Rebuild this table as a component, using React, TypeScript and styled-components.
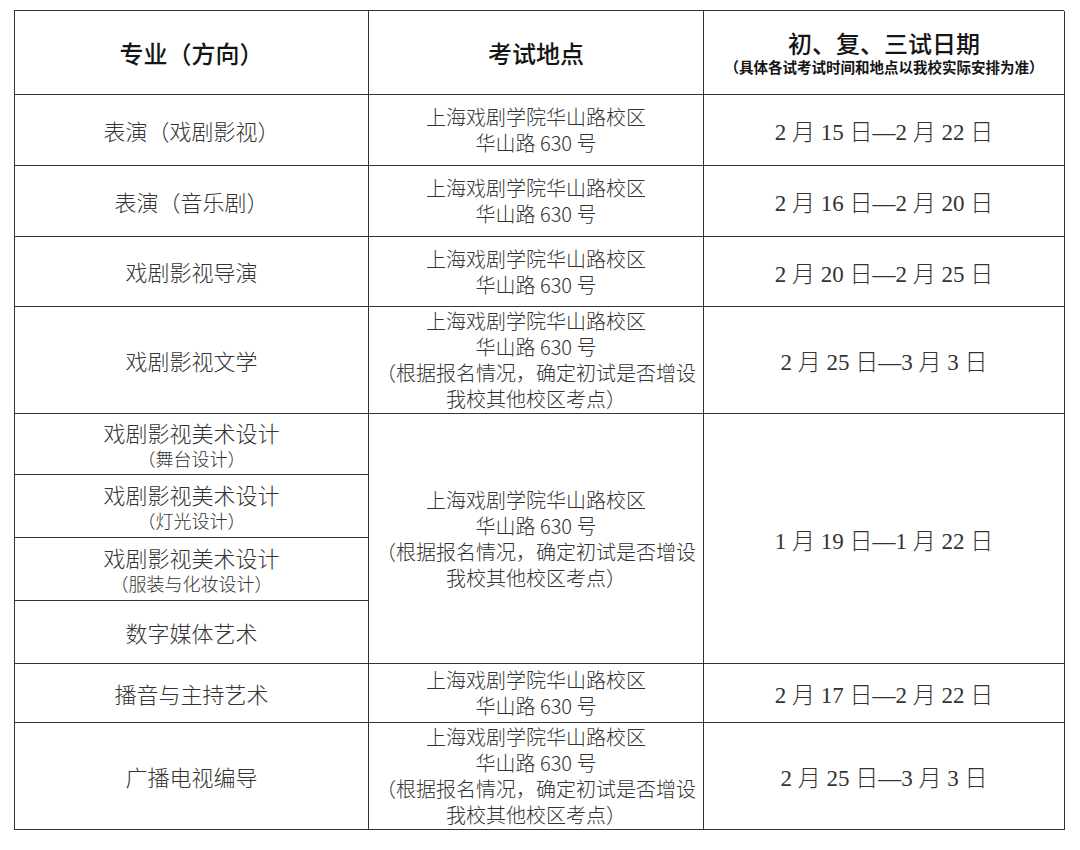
import styled, { createGlobalStyle } from 'styled-components'

const GlobalStyle = createGlobalStyle`
  html, body {
    margin: 0;
    background: #fff;
  }
  body {
    padding: 10px 0 0 14px;
    font-family: 'Noto Sans CJK SC', sans-serif;
  }
`

interface Major {
  name: string
  note?: string
  height: number
}

interface Group {
  majors: Major[]
  place: string[]
  date: string
}

const ADDR = ['上海戏剧学院华山路校区', '华山路 630 号']
const ADDR_MORE = [...ADDR, '（根据报名情况，确定初试是否增设', '我校其他校区考点）']

const groups: Group[] = [
  { majors: [{ name: '表演（戏剧影视）', height: 71 }], place: ADDR, date: '2 月 15 日—2 月 22 日' },
  { majors: [{ name: '表演（音乐剧）', height: 71 }], place: ADDR, date: '2 月 16 日—2 月 20 日' },
  { majors: [{ name: '戏剧影视导演', height: 70 }], place: ADDR, date: '2 月 20 日—2 月 25 日' },
  { majors: [{ name: '戏剧影视文学', height: 107 }], place: ADDR_MORE, date: '2 月 25 日—3 月 3 日' },
  {
    majors: [
      { name: '戏剧影视美术设计', note: '（舞台设计）', height: 61 },
      { name: '戏剧影视美术设计', note: '（灯光设计）', height: 63 },
      { name: '戏剧影视美术设计', note: '（服装与化妆设计）', height: 63 },
      { name: '数字媒体艺术', height: 63 },
    ],
    place: ADDR_MORE,
    date: '1 月 19 日—1 月 22 日',
  },
  { majors: [{ name: '播音与主持艺术', height: 59 }], place: ADDR, date: '2 月 17 日—2 月 22 日' },
  { majors: [{ name: '广播电视编导', height: 107 }], place: ADDR_MORE, date: '2 月 25 日—3 月 3 日' },
]

export default function App() {
  let row = 2
  return (
    <>
      <GlobalStyle />
      <Table>
        <HeadCell style={{ gridRow: 1, gridColumn: 1 }}>
          <HeadTitle>专业（方向）</HeadTitle>
        </HeadCell>
        <HeadCell style={{ gridRow: 1, gridColumn: 2 }}>
          <HeadTitle>考试地点</HeadTitle>
        </HeadCell>
        <HeadCell style={{ gridRow: 1, gridColumn: 3 }}>
          <HeadTitle>初、复、三试日期</HeadTitle>
          <HeadNote>（具体各试考试时间和地点以我校实际安排为准）</HeadNote>
        </HeadCell>

        {groups.map((group, gi) => {
          const start = row
          row += group.majors.length
          const span = `${start} / ${row}`
          return [
            ...group.majors.map((major, mi) => (
              <MajorCell key={`m${gi}-${mi}`} style={{ gridRow: start + mi, gridColumn: 1 }}>
                <MajorName>{major.name}</MajorName>
                {major.note && <MajorNote>{major.note}</MajorNote>}
              </MajorCell>
            )),
            <PlaceCell key={`p${gi}`} style={{ gridRow: span, gridColumn: 2 }}>
              {group.place.map((line, li) => (
                <div key={li}>{line}</div>
              ))}
            </PlaceCell>,
            <DateCell key={`d${gi}`} style={{ gridRow: span, gridColumn: 3 }}>
              {group.date}
            </DateCell>,
          ]
        })}
      </Table>
    </>
  )
}

const heights = [84, ...groups.flatMap((g) => g.majors.map((m) => m.height))]

const Table = styled.div`
  display: grid;
  width: 1050px;
  grid-template-columns: 354px 335px 361px;
  grid-template-rows: ${heights.map((h) => `${h}px`).join(' ')};
  border-top: 1px solid #333;
  border-left: 1px solid #333;
  box-sizing: border-box;
`

const Cell = styled.div`
  display: flex;
  flex-direction: column;
  align-items: center;
  justify-content: center;
  text-align: center;
  border-right: 1px solid #333;
  border-bottom: 1px solid #333;
  box-sizing: border-box;
  min-width: 0;
`

const HeadCell = styled(Cell)`
  color: #151515;
`

const HeadTitle = styled.div`
  font-size: 24px;
  font-weight: 500;
  line-height: 28px;
`

const HeadNote = styled.div`
  font-size: 14.5px;
  font-weight: 700;
  line-height: 20px;
`

const MajorCell = styled(Cell)`
  color: #333;
`

const MajorName = styled.div`
  font-size: 22px;
  line-height: 27px;
  font-weight: 300;
`

const MajorNote = styled.div`
  font-size: 18px;
  line-height: 24px;
  font-weight: 300;
`

const PlaceCell = styled(Cell)`
  color: #333;
  font-size: 20px;
  line-height: 26px;
  font-weight: 300;
  white-space: nowrap;
`

const DateCell = styled(Cell)`
  color: #333;
  font-family: 'Liberation Serif', 'Noto Sans CJK SC', serif;
  font-size: 23px;
  font-weight: 300;
  white-space: pre;
`
